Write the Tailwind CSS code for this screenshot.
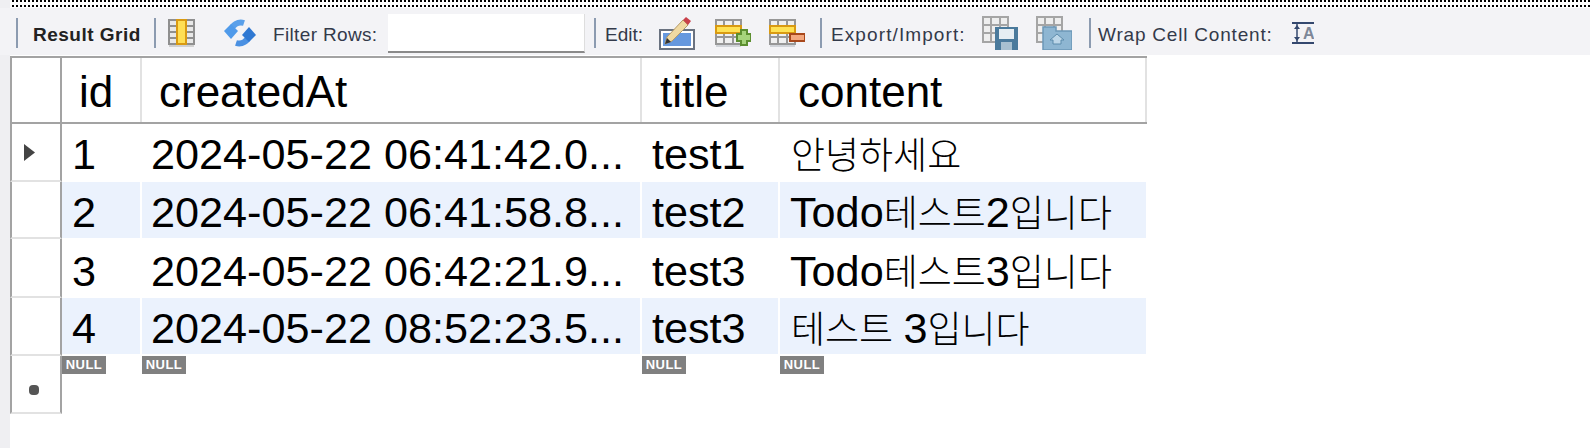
<!DOCTYPE html>
<html lang="en">
  <head>
    <meta charset="UTF-8" />
    <title>Result Grid</title>
    <script src="https://cdn.jsdelivr.net/npm/@tailwindcss/browser@4"></script>
  </head>
  <body class="w-[1590px] h-[448px] overflow-hidden bg-white font-['Liberation_Sans','Noto_Sans_CJK_KR',sans-serif] text-black flex">
    <div class="w-[10px] bg-[#efeff2]"></div>
    <div class="w-[1580px]">
      <!-- dotted selection edge -->
      <div class="h-[8px] ml-[2px] pb-[1px] flex flex-col justify-between">
        <div class="h-[2px] bg-[repeating-linear-gradient(90deg,#000_0_2px,transparent_2px_4px)]"></div>
        <div class="h-[2px] bg-[repeating-linear-gradient(90deg,#000_0_2px,transparent_2px_4px)]"></div>
      </div>

      <!-- toolbar -->
      <div class="h-[47px] pt-[3px] -ml-[10px] bg-[#f3f3f6] flex items-center text-[19px] leading-none text-[#333a4a] whitespace-nowrap">
        <div class="ml-[16px] w-[2px] h-[30px] bg-[#8c9bb0]"></div>
        <span class="ml-[15px] mt-[2px] w-[121px] font-bold text-[#222] tracking-[0.5px]">Result Grid</span>
        <div class="w-[2px] h-[30px] bg-[#8c9bb0]"></div>
        <svg class="ml-[12px]" width="28" height="28" viewBox="0 0 28 28">
          <rect x="1" y="1" width="25" height="24" fill="#e8e8e8" stroke="#8f8f8f" stroke-width="2" />
          <path d="M1 7h25M1 13h25M1 19h25" stroke="#8f8f8f" stroke-width="2" />
          <rect x="9" y="1" width="9" height="24" fill="#ffdf55" stroke="#d99a12" stroke-width="2" />
          <rect x="1" y="26" width="25" height="2" fill="#d0d0d0" />
        </svg>
        <svg class="ml-[28px]" width="32" height="28" viewBox="0 0 32 28">
          <path d="M7 12A10 10 0 0 1 20 4" fill="none" stroke="#5aa0ea" stroke-width="6" />
          <path d="M25 16A10 10 0 0 1 12 24" fill="none" stroke="#4a90e2" stroke-width="6" />
          <path d="M0 12l7-7 7 7-7 8z" fill="#4f9aea" />
          <path d="M32 16l-7 7-7-7 7-8z" fill="#2f78d2" />
        </svg>
        <span class="ml-[17px] mt-[2px] w-[115px] tracking-[0.35px]">Filter Rows:</span>
        <input type="text" class="w-[197px] h-[39px] bg-white border-b-2 border-r border-b-[#8a8a8a] border-r-[#dedede] outline-none" />
        <div class="ml-[9px] w-[2px] h-[30px] bg-[#8c9bb0]"></div>
        <span class="ml-[9px] mt-[2px] w-[54px]">Edit:</span>
        <svg width="36" height="34" viewBox="0 0 36 34">
          <rect x="1" y="14" width="34" height="19" fill="#fff" stroke="#6a7280" stroke-width="2" />
          <rect x="4" y="17" width="28" height="13" fill="#6698de" />
          <path d="M6 28l2-7L24 4l5 5-16 16z" fill="#f0d9a2" stroke="#b59a68" />
          <path d="M6 28l2-6 4 4z" fill="#333" />
          <path d="M24 4l3-3 5 4-3 4z" fill="#c9404a" />
        </svg>
        <svg class="ml-[20px]" width="36" height="28" viewBox="0 0 36 28">
          <rect x="1" y="1" width="25" height="24" fill="#f0f0f0" stroke="#979797" stroke-width="2" />
          <path d="M9 1v24M18 1v24M1 18h25" stroke="#979797" stroke-width="2" />
          <rect x="1" y="7" width="25" height="7" fill="#ffe254" stroke="#d99a12" stroke-width="2" />
          <rect x="1" y="26" width="25" height="2" fill="#d0d3d8" />
          <path d="M26 11h6v4h4v7h-4v4h-6v-4h-4v-7h4z" fill="#a6d47c" stroke="#5c8f30" stroke-width="2" />
        </svg>
        <svg class="ml-[18px]" width="36" height="28" viewBox="0 0 36 28">
          <rect x="1" y="1" width="25" height="24" fill="#f0f0f0" stroke="#979797" stroke-width="2" />
          <path d="M9 1v24M18 1v24M1 18h25" stroke="#979797" stroke-width="2" />
          <rect x="1" y="7" width="25" height="7" fill="#ffe254" stroke="#d99a12" stroke-width="2" />
          <rect x="1" y="26" width="25" height="2" fill="#d0d3d8" />
          <rect x="21" y="15" width="15" height="7" fill="#f2a77e" stroke="#a8481c" stroke-width="2" />
        </svg>
        <div class="ml-[15px] w-[2px] h-[30px] bg-[#8c9bb0]"></div>
        <span class="ml-[9px] mt-[2px] w-[151px] tracking-[1.1px]">Export/Import:</span>
        <svg width="36" height="34" viewBox="0 0 36 34">
          <rect x="1" y="1" width="25" height="25" fill="#eeeeee" stroke="#a5a5a5" stroke-width="2" />
          <path d="M9 1v25M18 1v25M1 9h25M1 17h25" stroke="#a5a5a5" stroke-width="2" />
          <rect x="13" y="11" width="23" height="23" fill="#4a7a9c" />
          <rect x="17" y="13" width="15" height="10" fill="#e6eef3" />
          <rect x="19" y="26" width="11" height="8" fill="#a8c0d0" />
        </svg>
        <svg class="ml-[18px]" width="36" height="34" viewBox="0 0 36 34">
          <rect x="1" y="1" width="25" height="25" fill="#eeeeee" stroke="#a5a5a5" stroke-width="2" />
          <path d="M9 1v25M18 1v25M1 9h25M1 17h25" stroke="#a5a5a5" stroke-width="2" />
          <path d="M7 11h13v4h16v19H7z" fill="#8eb6d2" stroke="#6c98b8" stroke-width="1.5" />
          <path d="M21 18l7 6-3 0v4h-8v-4h-3z" fill="#bcd6e8" stroke="#5d8cac" />
        </svg>
        <div class="ml-[17px] w-[2px] h-[30px] bg-[#8c9bb0]"></div>
        <span class="ml-[7px] mt-[2px] w-[194px] tracking-[0.8px]">Wrap Cell Content:</span>
        <svg width="22" height="22" viewBox="0 0 22 22">
          <path d="M0 1h22M0 21h22" stroke="#34486e" stroke-width="2" />
          <path d="M5 2v18" stroke="#34486e" stroke-width="1.5" />
          <path d="M2 7h6l-3-4zM2 15h6l-3 4z" fill="#34486e" />
          <text x="11" y="17" font-size="16" font-weight="bold" fill="#7d8798" font-family="Liberation Sans">A</text>
        </svg>
      </div>

      <!-- grid -->
      <div class="w-[1137px] mt-[1px]">
        <!-- header -->
        <div class="flex h-[68px] border-y-2 border-[#a3a3a3] text-[44px] leading-[67px]">
          <div class="w-[52px] border-x-2 border-[#a3a3a3]"></div>
          <div class="w-[80px] pl-[17px] border-r-2 border-[#e2e2e2]">id</div>
          <div class="w-[500px] pl-[17px] border-r-2 border-[#e2e2e2]">createdAt</div>
          <div class="w-[138px] pl-[18px] border-r-2 border-[#e2e2e2]">title</div>
          <div class="w-[367px] pl-[18px] border-r-2 border-[#e2e2e2]">content</div>
        </div>

        <!-- rows -->
        <div class="flex h-[58px] text-[43.2px] leading-[60px]">
          <div class="w-[52px] border-x-2 border-b-2 border-l-[#a3a3a3] border-r-[#a3a3a3] border-b-[#e2e2e2] flex items-center pl-[12px]">
            <svg width="11" height="17" viewBox="0 0 11 17"><path d="M0 0l11 8.500L0 17z" fill="#444" /></svg>
          </div>
          <div class="w-[80px] pl-[10px] border-r-2 border-white">1</div>
          <div class="w-[500px] pl-[9px] border-r-2 border-white">2024-05-22 06:41:42.0...</div>
          <div class="w-[138px] pl-[10px] border-r-2 border-white">test1</div>
          <div class="w-[366px] pl-[11px]"><span class="text-[37px] font-light">안녕하세요</span></div>
        </div>
        <div class="flex h-[57px] text-[43.2px] leading-[60px]">
          <div class="w-[52px] border-x-2 border-b-2 border-l-[#a3a3a3] border-r-[#a3a3a3] border-b-[#e2e2e2]"></div>
          <div class="w-[80px] h-[56px] pl-[10px] bg-[#ebf2fd] border-r-2 border-white">2</div>
          <div class="w-[500px] h-[56px] pl-[9px] bg-[#ebf2fd] border-r-2 border-white">2024-05-22 06:41:58.8...</div>
          <div class="w-[138px] h-[56px] pl-[10px] bg-[#ebf2fd] border-r-2 border-white">test2</div>
          <div class="w-[366px] h-[56px] pl-[10px] bg-[#ebf2fd]">Todo<span class="text-[37px] font-light">테스트</span>2<span class="text-[37px] font-light">입니다</span></div>
        </div>
        <div class="flex h-[59px] text-[43.2px] leading-[64px]">
          <div class="w-[52px] border-x-2 border-b-2 border-l-[#a3a3a3] border-r-[#a3a3a3] border-b-[#e2e2e2]"></div>
          <div class="w-[80px] pl-[10px] border-r-2 border-white">3</div>
          <div class="w-[500px] pl-[9px] border-r-2 border-white">2024-05-22 06:42:21.9...</div>
          <div class="w-[138px] pl-[10px] border-r-2 border-white">test3</div>
          <div class="w-[366px] pl-[10px]">Todo<span class="text-[37px] font-light">테스트</span>3<span class="text-[37px] font-light">입니다</span></div>
        </div>
        <div class="flex h-[58px] text-[43.2px] leading-[60px]">
          <div class="w-[52px] border-x-2 border-b-2 border-l-[#a3a3a3] border-r-[#a3a3a3] border-b-[#e2e2e2]"></div>
          <div class="w-[80px] h-[56px] pl-[10px] bg-[#ebf2fd] border-r-2 border-white">4</div>
          <div class="w-[500px] h-[56px] pl-[9px] bg-[#ebf2fd] border-r-2 border-white">2024-05-22 08:52:23.5...</div>
          <div class="w-[138px] h-[56px] pl-[10px] bg-[#ebf2fd] border-r-2 border-white">test3</div>
          <div class="w-[366px] h-[56px] pl-[11px] bg-[#ebf2fd]"><span class="text-[37px] font-light">테스트 </span>3<span class="text-[37px] font-light">입니다</span></div>
        </div>

        <!-- new row -->
        <div class="flex h-[58px]">
          <div class="w-[52px] border-x-2 border-b-2 border-l-[#a3a3a3] border-r-[#a3a3a3] border-b-[#e2e2e2] flex items-center justify-center pt-[12px] pr-[4px]">
            <div class="w-[10px] h-[10px] rounded-[4px] bg-[#555]"></div>
          </div>
          <div class="w-[80px]"><div class="w-[44px] h-[18px] bg-[#808080] text-white text-[13px] leading-[18px] font-bold tracking-[0.5px] text-center">NULL</div></div>
          <div class="w-[500px]"><div class="w-[44px] h-[18px] bg-[#808080] text-white text-[13px] leading-[18px] font-bold tracking-[0.5px] text-center">NULL</div></div>
          <div class="w-[138px]"><div class="w-[44px] h-[18px] bg-[#808080] text-white text-[13px] leading-[18px] font-bold tracking-[0.5px] text-center">NULL</div></div>
          <div class="w-[366px]"><div class="w-[44px] h-[18px] bg-[#808080] text-white text-[13px] leading-[18px] font-bold tracking-[0.5px] text-center">NULL</div></div>
        </div>
      </div>
    </div>
  </body>
</html>
